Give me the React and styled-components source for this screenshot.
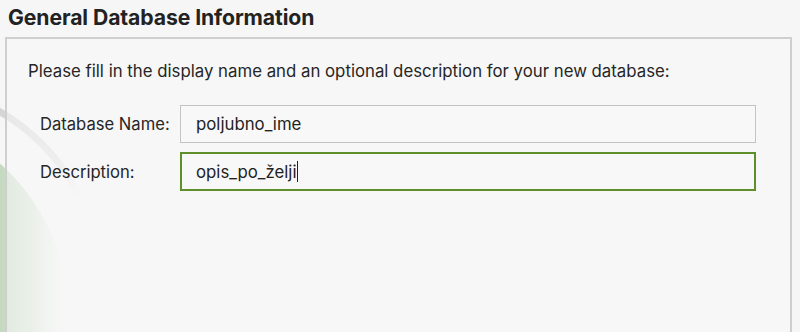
import React from 'react';
import styled, { createGlobalStyle } from 'styled-components';

const GlobalStyle = createGlobalStyle`
  html, body {
    margin: 0;
    padding: 0;
    background: #f6f6f6;
    font-family: Inter, "Noto Sans", "Liberation Sans", sans-serif;
    color: #262626;
    overflow: hidden;
  }
`;

export default function App() {
  return (
    <Page>
      <GlobalStyle />
      <Watermark width="140" height="332" viewBox="0 0 140 332">
        <defs>
          <linearGradient id="greenFade" gradientUnits="userSpaceOnUse" x1="0" y1="0" x2="75" y2="0">
            <stop offset="0" stopColor="#c4d9c0" />
            <stop offset="0.45" stopColor="#dbe8d9" />
            <stop offset="1" stopColor="#f6f6f6" stopOpacity="0" />
          </linearGradient>
          <linearGradient id="arcFade" gradientUnits="userSpaceOnUse" x1="0" y1="95" x2="80" y2="215">
            <stop offset="0" stopColor="#d2d2d2" />
            <stop offset="0.6" stopColor="#e2e2e2" />
            <stop offset="1" stopColor="#f6f6f6" stopOpacity="0" />
          </linearGradient>
        </defs>
        <circle cx="-140" cy="320" r="210" fill="url(#greenFade)" />
        <circle cx="-100" cy="285" r="200" fill="none" stroke="url(#arcFade)" strokeWidth="7" />
      </Watermark>
      <Title>General Database Information</Title>
      <Panel>
        <Intro>Please fill in the display name and an optional description for your new database:</Intro>
        <Form>
          <Label>Database Name:</Label>
          <Field>poljubno_ime</Field>
          <Label>Description:</Label>
          <Field $focused>
            opis_po_želji<Caret />
          </Field>
        </Form>
      </Panel>
    </Page>
  );
}

const Page = styled.div`
  position: relative;
  height: 332px;
  padding: 4px 8px 0 5px;
  box-sizing: border-box;
`;

const Watermark = styled.svg`
  position: absolute;
  left: 0;
  top: 0;
  z-index: 0;
`;

const Title = styled.h1`
  position: relative;
  margin: 0 0 7px 3px;
  font-size: 21.2px;
  font-weight: 700;
  color: #222;
  line-height: 26px;
  letter-spacing: -0.1px;
`;

const Panel = styled.div`
  position: relative;
  height: 300px;
  border: 2px solid #cfcfd2;
  border-bottom: none;
  background: rgba(247, 247, 247, 0.55);
  padding: 20px 0 0 21px;
  box-sizing: border-box;
`;

const Intro = styled.p`
  margin: 0;
  font-size: 16.8px;
  line-height: 24px;
  color: #262626;
`;

const Form = styled.div`
  display: grid;
  grid-template-columns: 140px 576px;
  row-gap: 9px;
  margin: 22px 0 0 12px;
  align-items: center;
`;

const Label = styled.span`
  font-size: 16.6px;
  color: #262626;
`;

const Field = styled.div`
  height: ${({ $focused }) => ($focused ? '39px' : '38px')};
  box-sizing: border-box;
  border: ${({ $focused }) => ($focused ? '2px solid #5f8f2b' : '1px solid #c4c4c4')};
  padding-left: ${({ $focused }) => ($focused ? '14px' : '15px')};
  display: flex;
  align-items: center;
  background: #f8f8f8;
  font-size: 16.8px;
  color: #222;
`;

const Caret = styled.span`
  display: inline-block;
  width: 1px;
  height: 21px;
  background: #222;
  margin-left: 1px;
`;
